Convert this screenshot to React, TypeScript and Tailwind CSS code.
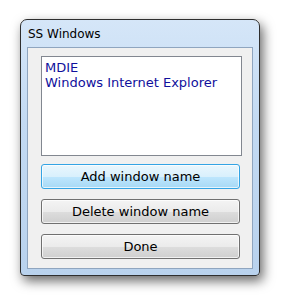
const items = ["MDIE", "Windows Internet Explorer"];

function Button({ label, focused }: { label: string; focused?: boolean }) {
  return (
    <button
      className={
        focused
          ? "h-[25px] w-[199px] rounded-[3px] border border-[#34a4e4] bg-[linear-gradient(to_bottom,#eaf6fd_0%,#d9f0fc_50%,#bee6fd_51%,#a7d9f5_100%)] shadow-[inset_0_0_0_1px_rgba(255,255,255,0.7)] text-[13px] text-black"
          : "h-[25px] w-[199px] rounded-[3px] border border-[#707070] bg-[linear-gradient(to_bottom,#f4f4f4_0%,#ebebeb_50%,#dddddd_51%,#cfcfcf_100%)] shadow-[inset_0_0_0_1px_rgba(255,255,255,0.7)] text-[13px] text-black"
      }
      style={{ fontFamily: '"DejaVu Sans", sans-serif' }}
    >
      {label}
    </button>
  );
}

export default function App() {
  return (
    <div className="h-[298px] w-[282px] bg-white pl-[20px] pt-[19px]">
      {/* Window frame */}
      <div className="flex h-[257px] w-[240px] flex-col rounded-t-[7px] rounded-b-[4px] border border-[#2e2e2e] bg-[linear-gradient(to_bottom,#d5e6f8_0%,#c3daf3_40%,#b9d2ed_100%)] px-[6px] pb-[6px] shadow-[3px_5px_12px_rgba(0,0,0,0.6)]">
        {/* Title bar */}
        <div
          className="flex h-[27px] shrink-0 items-center pl-[1px] pt-[1px] text-[12px] text-black"
          style={{ fontFamily: '"DejaVu Sans", sans-serif' }}
        >
          SS Windows
        </div>

        {/* Client area */}
        <div className="flex flex-1 flex-col border border-[#8fa5bf] bg-[#f0f0f0] pl-[13px] pt-[8px]">
          <div
            className="h-[100px] w-[201px] border border-[#828790] bg-white px-[3px] pt-[3px] text-[13px] leading-[15px] text-[#10109c]"
            style={{ fontFamily: '"DejaVu Sans", sans-serif' }}
          >
            {items.map((it) => (
              <div key={it}>{it}</div>
            ))}
          </div>
          <div className="mt-[8px] flex flex-col gap-[10px]">
            <Button label="Add window name" focused />
            <Button label="Delete window name" />
            <Button label="Done" />
          </div>
        </div>
      </div>
    </div>
  );
}
